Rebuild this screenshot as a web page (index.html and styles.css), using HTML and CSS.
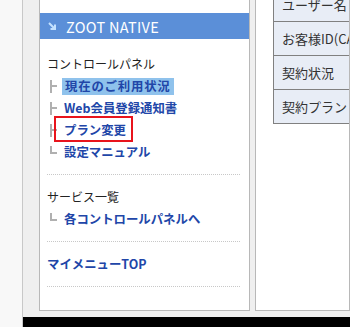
FILE: index.html
```html
<!DOCTYPE html>
<html lang="ja">
<head>
  <meta charset="UTF-8">
  <title>マイメニュー</title>
  <link rel="stylesheet" href="styles.css">
</head>
<body>

  <div class="page">
    <div class="columns">
      <aside class="side">
        <h2 class="side-title">
          <svg class="side-arrow" width="9" height="9" viewBox="0 0 9 9">
            <path d="M1 1 L7 7 M7 2.5 L7 7 L2.5 7" fill="none" stroke="#c4e2ff" stroke-width="2"/>
          </svg>
          ZOOT NATIVE
        </h2>

        <div class="side-section">
          <p class="side-heading">コントロールパネル</p>
          <ul class="tree">
            <li><span class="branch"></span><a class="current" href="#">現在のご利用状況</a></li>
            <li><span class="branch"></span><a href="#">Web会員登録通知書</a></li>
            <li class="marked"><span class="branch"></span><a href="#">プラン変更</a></li>
            <li><span class="branch last"></span><a href="#">設定マニュアル</a></li>
          </ul>
        </div>

        <div class="side-section">
          <p class="side-heading">サービス一覧</p>
          <ul class="tree">
            <li><span class="branch last"></span><a href="#">各コントロールパネルへ</a></li>
          </ul>
        </div>

        <div class="side-section">
          <a class="side-link" href="#">マイメニューTOP</a>
        </div>
      </aside>

      <main class="content">
        <table class="info">
          <tr><th>ユーザー名</th><td></td></tr>
          <tr><th>お客様ID(CAN)</th><td></td></tr>
          <tr><th>契約状況</th><td></td></tr>
          <tr><th>契約プラン</th><td></td></tr>
        </table>
      </main>
    </div>

    <div class="footer"></div>
  </div>

</body>
</html>
```

FILE: styles.css
```css
html, body {
  margin: 0;
  overflow: hidden;
}

body {
  background-color: #f8f8f8;
  font-family: "Noto Sans CJK JP", "Liberation Sans", sans-serif;
  font-size: 12px;
  color: #333;
}

.page {
  margin-left: 22px;
  border-left: 1px solid #c8c8c8;
  background-color: #efefef;
}

.columns {
  display: flex;
  gap: 5px;
  margin-top: -20px;
  padding-left: 16px;
  padding-bottom: 6px;
}

/* ---------- left menu ---------- */
.side {
  box-sizing: border-box;
  width: 211px;
  height: 331px;
  padding-top: 32px;
  background-color: #fff;
  border: 1px solid #b8b8b8;
}

.side-title {
  display: flex;
  align-items: center;
  gap: 9px;
  height: 26px;
  margin: 0;
  padding-left: 8px;
  background-color: #5b8fd8;
  color: #fff;
  font-size: 14.5px;
  font-weight: normal;
  letter-spacing: 0.3px;
}

.side-arrow {
  flex: none;
}

.side-section {
  margin: 0 9px 0 7px;
  padding: 11px 0;
  border-bottom: 1px dotted #c8c8c8;
}

.side-section:first-of-type {
  padding-top: 14px;
}

.side-heading {
  margin: 0;
  height: 22px;
  line-height: 22px;
  color: #222;
  font-size: 12px;
}

.tree {
  list-style: none;
  margin: 0;
  padding: 0 0 0 3px;
}

.tree li {
  display: flex;
  align-items: center;
  height: 22px;
}

.marked {
  position: relative;
}

.marked::after {
  content: "";
  position: absolute;
  left: 4px;
  top: -3px;
  width: 75px;
  height: 22px;
  border: 2px solid #e8141c;
}

.branch {
  box-sizing: border-box;
  flex: none;
  width: 7px;
  height: 13px;
  margin-right: 7px;
  border-left: 2px solid #b0b0b0;
  background: linear-gradient(#b0b0b0, #b0b0b0) no-repeat left center / 7px 2px;
}

.branch.last {
  height: 8px;
  margin-top: -5px;
  background-position: left bottom;
}

.tree a,
.side-link {
  color: #2146a8;
  font-size: 12.4px;
  font-weight: bold;
  text-decoration: none;
}

.side-link {
  display: block;
  height: 22px;
  line-height: 22px;
}

.current {
  padding: 0 3px;
  margin-left: -2px;
  background-color: #8fc2ec;
  line-height: 17px;
  letter-spacing: 0.8px;
}

/* ---------- right content ---------- */
.content {
  box-sizing: border-box;
  flex: 1;
  height: 331px;
  padding: 6px 0 0 17px;
  background-color: #fff;
  border: 1px solid #b8b8b8;
  overflow: hidden;
}

.info {
  border-collapse: collapse;
  width: 320px;
}

.info th,
.info td {
  height: 33px;
  border: 1px solid #808080;
  padding: 0 8px;
  font-size: 13px;
  font-weight: normal;
  text-align: left;
  white-space: nowrap;
}

.info th {
  width: 110px;
  background-color: #e8edf6;
  color: #333;
}

.footer {
  height: 12px;
  background-color: #000;
}
```
